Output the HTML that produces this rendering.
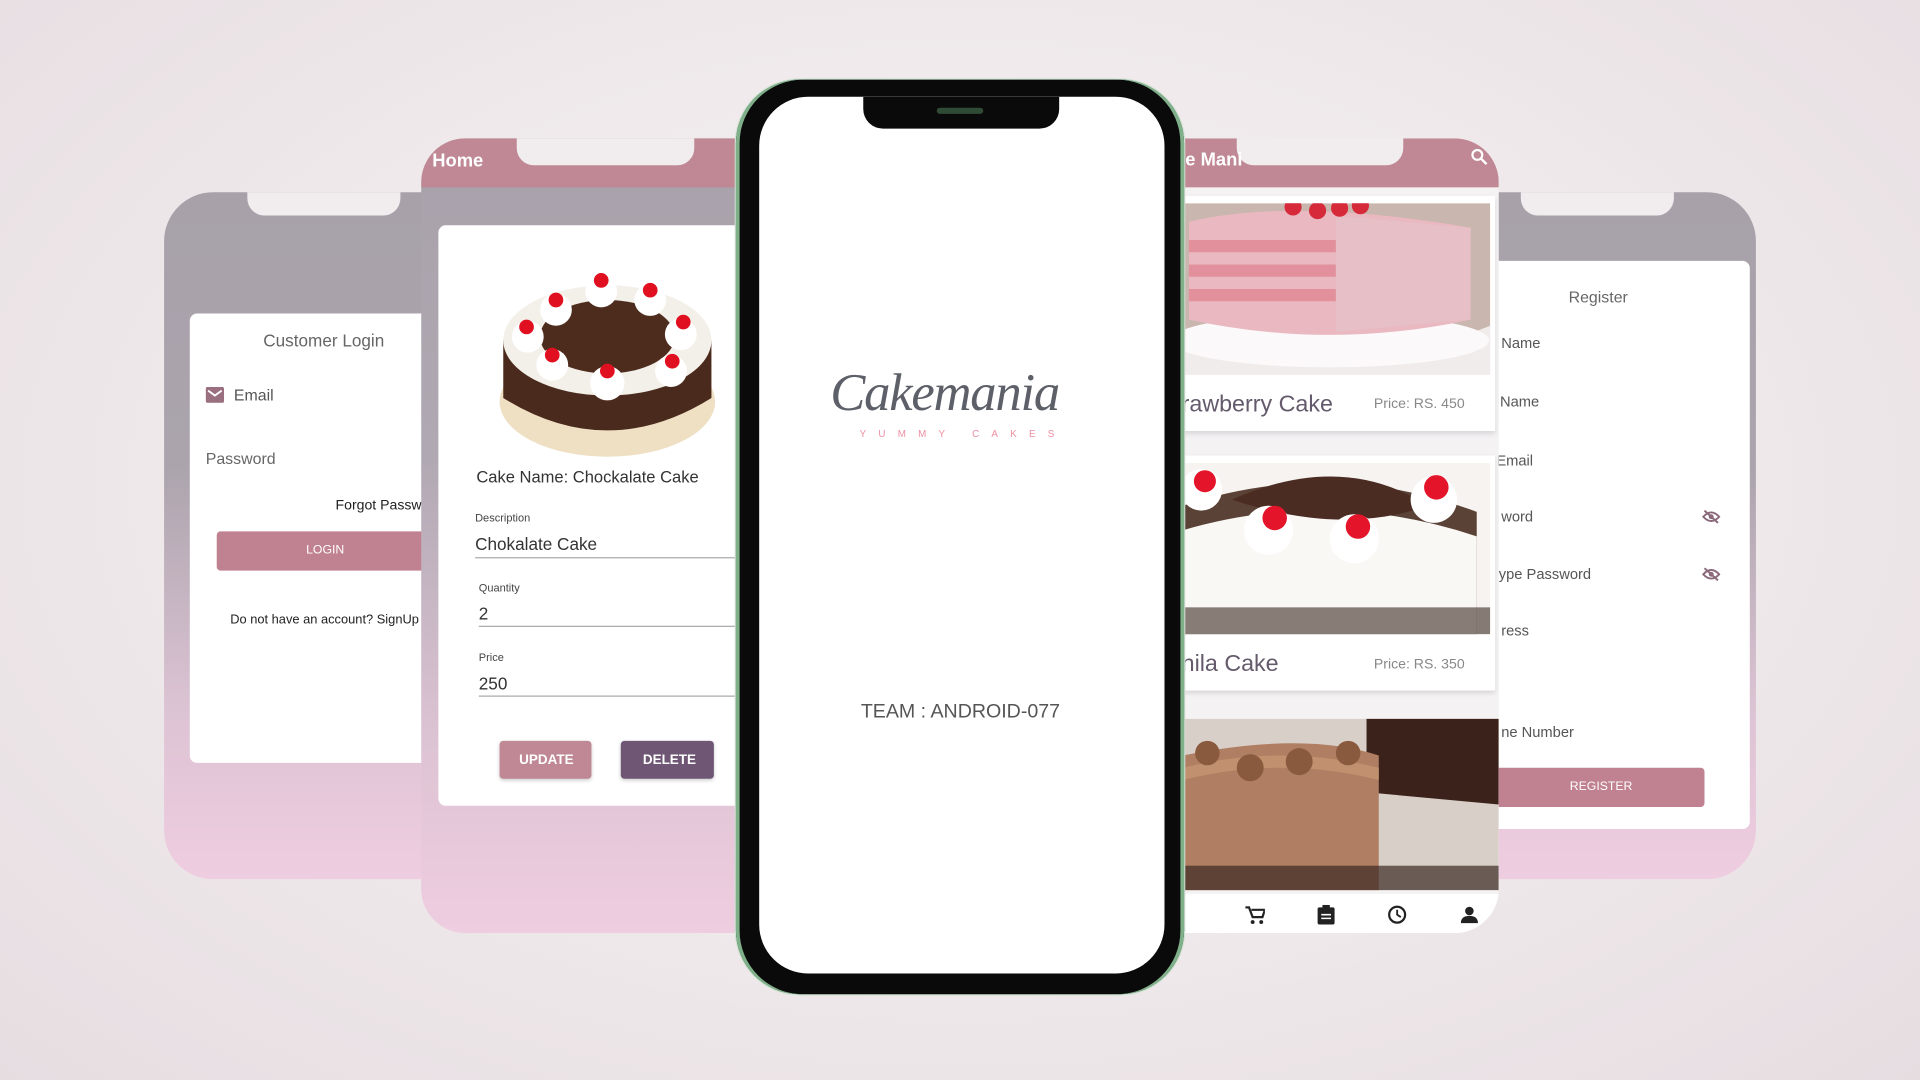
<!DOCTYPE html>
<html><head><meta charset="utf-8"><style>
*{margin:0;padding:0;box-sizing:border-box}
html,body{width:1920px;height:1080px;overflow:hidden;background:#eee8ea}
#w{position:absolute;left:0;top:0;width:1568px;height:882px;transform:scale(1.22449);transform-origin:0 0;
background:radial-gradient(ellipse at 50% 45%,#f7f4f5 0%,#efe9eb 55%,#e6dde1 100%);font-family:"Liberation Sans",sans-serif;overflow:hidden}
.abs{position:absolute}
.ph{position:absolute;overflow:hidden}
.t{position:absolute;white-space:nowrap}
</style></head><body><div id="w">

<!-- left login phone -->
<div class="ph" style="left:134px;top:157px;width:230px;height:561px;border-radius:40px 0 0 40px;background:linear-gradient(#a8a1aa 0%,#aba4ad 40%,#dcc3d3 75%,#efcde0 100%)">
  <div class="abs" style="left:68px;top:-2px;width:125px;height:21px;background:#f1edef;border-radius:0 0 14px 14px"></div>
  <div class="abs" style="left:21px;top:99px;width:210px;height:367px;background:#fff;border-radius:6px"></div>
  <div class="t" style="left:81px;top:113px;font-size:14px;color:#666">Customer Login</div>
  <svg class="abs" style="left:34px;top:159px" width="15" height="13"><rect width="15" height="13" rx="1.5" fill="#9a6f7f"/><path d="M2 3l5.5 4 5.5-4" stroke="#fff" stroke-width="1.6" fill="none"/></svg>
  <div class="t" style="left:57px;top:158px;font-size:13px;color:#555">Email</div>
  <div class="t" style="left:34px;top:210px;font-size:13px;color:#666">Password</div>
  <div class="t" style="left:140px;top:250px;font-size:11.5px;color:#222">Forgot Password?</div>
  <div class="abs" style="left:43px;top:277px;width:180px;height:32px;background:#c08290;border-radius:3px"></div>
  <div class="t" style="left:116px;top:287px;font-size:10px;color:#fff">LOGIN</div>
  <div class="t" style="left:54px;top:343px;font-size:10.5px;color:#222">Do not have an account? SignUp</div>
</div>

<!-- far right register phone -->
<div class="ph" style="left:1200px;top:157px;width:234px;height:561px;border-radius:0 40px 40px 0;background:linear-gradient(#a8a1aa 0%,#aba4ad 40%,#dcc3d3 75%,#efcde0 100%)">
  <div class="abs" style="left:42px;top:-2px;width:125px;height:21px;background:#f1edef;border-radius:0 0 14px 14px"></div>
  <div class="abs" style="left:0;top:56px;width:229px;height:464px;background:#fff;border-radius:6px"></div>
  <div class="t" style="left:81px;top:78px;font-size:13px;color:#666">Register</div>
  <div class="t" style="left:26px;top:116px;font-size:12px;color:#555">Name</div>
  <div class="t" style="left:25px;top:164px;font-size:12px;color:#555">Name</div>
  <div class="t" style="left:22px;top:212px;font-size:12px;color:#555">Email</div>
  <div class="t" style="left:26px;top:258px;font-size:12px;color:#555">word</div>
  <div class="t" style="left:24px;top:305px;font-size:12px;color:#555">ype Password</div>
  <div class="t" style="left:26px;top:351px;font-size:12px;color:#555">ress</div>
  <div class="t" style="left:26px;top:434px;font-size:12px;color:#555">ne Number</div>
  <svg class="abs" style="left:190px;top:259px" width="15" height="12"><path d="M1 6q6.5-7 13 0q-6.5 7-13 0z" fill="none" stroke="#8a6a7a" stroke-width="1.6"/><circle cx="7.5" cy="6" r="2" fill="#8a6a7a"/><path d="M2 1l11 10" stroke="#8a6a7a" stroke-width="1.6"/></svg>
  <svg class="abs" style="left:190px;top:306px" width="15" height="12"><path d="M1 6q6.5-7 13 0q-6.5 7-13 0z" fill="none" stroke="#8a6a7a" stroke-width="1.6"/><circle cx="7.5" cy="6" r="2" fill="#8a6a7a"/><path d="M2 1l11 10" stroke="#8a6a7a" stroke-width="1.6"/></svg>
  <div class="abs" style="left:0;top:470px;width:192px;height:32px;background:#c08290;border-radius:3px"></div>
  <div class="t" style="left:82px;top:480px;font-size:10px;color:#fff">REGISTER</div>
</div>

<!-- home phone -->
<div class="ph" style="left:344px;top:113px;width:270px;height:649px;border-radius:36px 0 0 36px;background:linear-gradient(#a8a1aa 0%,#b0a8b2 40%,#dcc3d3 75%,#efcde0 100%)">
  <div class="abs" style="left:0;top:0;width:270px;height:40px;background:#bf8894"></div>
  <div class="abs" style="left:78px;top:-2px;width:145px;height:24px;background:#f1edef;border-radius:0 0 14px 14px"></div>
  <div class="t" style="left:9px;top:10px;font-size:15px;font-weight:bold;color:#fff">Home</div>
  <div class="abs" style="left:14px;top:71px;width:256px;height:474px;background:#fff;border-radius:6px"></div>
  <svg class="abs" style="left:62px;top:100px" width="180" height="165">
    <ellipse cx="90" cy="115" rx="88" ry="45" fill="#efe0c4"/>
    <path d="M5 65 L5 112 Q90 165 175 112 L175 65z" fill="#4a2a1c"/>
    <ellipse cx="90" cy="65" rx="85" ry="45" fill="#f3efe9"/>
    <ellipse cx="90" cy="62" rx="55" ry="30" fill="#4d2c1d"/>
    <g fill="#fff"><circle cx="48" cy="40" r="13"/><circle cx="85" cy="25" r="13"/><circle cx="125" cy="32" r="13"/><circle cx="150" cy="60" r="13"/><circle cx="142" cy="90" r="13"/><circle cx="90" cy="100" r="14"/><circle cx="45" cy="85" r="13"/><circle cx="25" cy="62" r="13"/></g>
    <g fill="#e01020"><circle cx="48" cy="32" r="6"/><circle cx="85" cy="16" r="6"/><circle cx="125" cy="24" r="6"/><circle cx="152" cy="50" r="6"/><circle cx="143" cy="82" r="6"/><circle cx="90" cy="90" r="6"/><circle cx="45" cy="77" r="6"/><circle cx="24" cy="54" r="6"/></g>
  </svg>
  <div class="t" style="left:45px;top:269px;font-size:13.5px;color:#333">Cake Name: Chockalate Cake</div>
  <div class="t" style="left:44px;top:305px;font-size:9px;color:#444">Description</div>
  <div class="t" style="left:44px;top:323px;font-size:14px;color:#333">Chokalate Cake</div>
  <div class="abs" style="left:44px;top:342px;width:226px;height:1px;background:#aaa"></div>
  <div class="t" style="left:47px;top:362px;font-size:9px;color:#444">Quantity</div>
  <div class="t" style="left:47px;top:380px;font-size:14px;color:#333">2</div>
  <div class="abs" style="left:47px;top:398px;width:223px;height:1px;background:#aaa"></div>
  <div class="t" style="left:47px;top:419px;font-size:9px;color:#444">Price</div>
  <div class="t" style="left:47px;top:437px;font-size:14px;color:#333">250</div>
  <div class="abs" style="left:47px;top:455px;width:223px;height:1px;background:#aaa"></div>
  <div class="abs" style="left:64px;top:492px;width:75px;height:31px;background:#bf8894;border-radius:3px;box-shadow:0 1px 3px #0003"></div>
  <div class="t" style="left:80px;top:502px;font-size:11px;font-weight:bold;color:#fff">UPDATE</div>
  <div class="abs" style="left:163px;top:492px;width:76px;height:31px;background:#6f5674;border-radius:3px;box-shadow:0 1px 3px #0003"></div>
  <div class="t" style="left:181px;top:502px;font-size:11px;font-weight:bold;color:#fff">DELETE</div>
</div>

<!-- menu phone -->
<div class="ph" style="left:955px;top:113px;width:269px;height:649px;border-radius:0 36px 36px 0;background:#f4f2f3">
  <div class="abs" style="left:0;top:0;width:269px;height:40px;background:#bf8894"></div>
  <div class="abs" style="left:55px;top:-2px;width:136px;height:24px;background:#f1edef;border-radius:0 0 14px 14px"></div>
  <div class="t" style="left:13px;top:9px;font-size:15px;font-weight:bold;color:#fff">e Mani</div>
  <svg class="abs" style="left:246px;top:8px" width="14" height="14"><circle cx="5.5" cy="5.5" r="4" fill="none" stroke="#fff" stroke-width="1.8"/><path d="M8.5 8.5l4.5 4.5" stroke="#fff" stroke-width="2"/></svg>
  <div class="abs" style="left:0;top:47px;width:266px;height:192px;background:#fff;box-shadow:0 2px 4px #0002"></div>
  <svg class="abs" style="left:11px;top:53px" width="251" height="140">
    <rect width="251" height="140" fill="#c9b6ae"/>
    <path d="M0 110 Q125 150 251 100 L251 140 L0 140z" fill="#efeceb"/>
    <ellipse cx="120" cy="112" rx="130" ry="22" fill="#fbf9f9"/>
    <path d="M5 15 Q90 -5 235 20 L235 95 Q120 120 5 95z" fill="#e9b8c0"/>
    <g fill="#e2919c"><rect x="5" y="30" width="120" height="10"/><rect x="5" y="50" width="120" height="10"/><rect x="5" y="70" width="120" height="10"/></g>
    <path d="M125 10 L235 20 L235 95 L125 105z" fill="#e7bfc6"/>
    <g fill="#d62a3a"><circle cx="90" cy="3" r="7"/><circle cx="110" cy="6" r="7"/><circle cx="128" cy="4" r="7"/><circle cx="145" cy="2" r="7"/></g>
  </svg>
  <div class="t" style="left:10px;top:207px;font-size:19px;color:#645a6b">rawberry Cake</div>
  <div class="t" style="left:167px;top:211px;font-size:11.5px;color:#888">Price: RS. 450</div>
  <div class="abs" style="left:0;top:259px;width:266px;height:192px;background:#fff;box-shadow:0 2px 4px #0002"></div>
  <svg class="abs" style="left:11px;top:265px" width="251" height="140">
    <rect width="251" height="140" fill="#f6f3f1"/>
    <path d="M0 35 Q120 -5 240 40 L240 140 L0 140z" fill="#5b4236"/>
    <path d="M0 55 Q120 20 240 60 L240 140 L0 140z" fill="#faf8f5"/>
    <path d="M40 30 Q130 -10 200 35 Q130 60 40 30z" fill="#4a2c22"/>
    <g fill="#fff"><circle cx="15" cy="22" r="17"/><circle cx="70" cy="55" r="20"/><circle cx="140" cy="62" r="20"/><circle cx="205" cy="30" r="19"/></g>
    <g fill="#e4142a"><circle cx="18" cy="15" r="9"/><circle cx="75" cy="45" r="10"/><circle cx="143" cy="52" r="10"/><circle cx="207" cy="20" r="10"/></g>
    <rect x="0" y="118" width="251" height="22" fill="#3a2a22" opacity=".6"/>
  </svg>
  <div class="t" style="left:10px;top:419px;font-size:19px;color:#645a6b">nila Cake</div>
  <div class="t" style="left:167px;top:424px;font-size:11.5px;color:#888">Price: RS. 350</div>
  <svg class="abs" style="left:11px;top:474px" width="258" height="140">
    <rect width="258" height="140" fill="#d9cfc9"/>
    <path d="M150 0 L258 0 L258 70 L150 60z" fill="#3b231b"/>
    <path d="M0 30 Q100 10 160 30 L160 140 L0 140z" fill="#b07e62"/>
    <path d="M0 40 Q80 20 160 40 L160 50 Q80 30 0 50z" fill="#c0906f"/>
    <g fill="#8a5a3e"><circle cx="20" cy="28" r="10"/><circle cx="55" cy="40" r="11"/><circle cx="95" cy="35" r="11"/><circle cx="135" cy="28" r="10"/></g>
    <rect x="0" y="120" width="258" height="20" fill="#3b2a22" opacity=".7"/>
  </svg>
  <div class="abs" style="left:0;top:617px;width:269px;height:32px;background:#fff"></div>
  <svg class="abs" style="left:62px;top:627px" width="16" height="15"><path d="M0 1h3l3 8h8l2-6H5" fill="none" stroke="#222" stroke-width="1.8"/><circle cx="6" cy="13" r="1.6" fill="#222"/><circle cx="13" cy="13" r="1.6" fill="#222"/></svg>
  <svg class="abs" style="left:121px;top:626px" width="14" height="16"><rect x="0" y="2" width="14" height="14" rx="1.5" fill="#222"/><rect x="4" y="0" width="6" height="4" fill="#222"/><path d="M3 8h8M3 11h8" stroke="#fff" stroke-width="1.3"/></svg>
  <svg class="abs" style="left:178px;top:626px" width="16" height="16"><circle cx="8" cy="8" r="6.5" fill="none" stroke="#222" stroke-width="1.8"/><path d="M8 4v4l3 2" fill="none" stroke="#222" stroke-width="1.5"/></svg>
  <svg class="abs" style="left:238px;top:627px" width="14" height="14"><circle cx="7" cy="4" r="3.5" fill="#222"/><path d="M0 14q0-6 7-6t7 6z" fill="#222"/></svg>
</div>

<!-- center phone -->
<div class="abs" style="left:601px;top:65px;width:366px;height:747px;border-radius:52px;background:#0a0a0a;box-shadow:-3px 0 0 #7fb08a inset, 3px 0 0 #7fb08a inset, 0 0 0 1px #cfe3d2"></div>
<div class="abs" style="left:620px;top:79px;width:331px;height:716px;border-radius:40px;background:#fff;overflow:hidden">
  <div class="abs" style="left:85px;top:0;width:160px;height:26px;background:#0a0a0a;border-radius:0 0 16px 16px"></div>
  <div class="abs" style="left:145px;top:9px;width:38px;height:5px;background:#2f4a35;border-radius:3px"></div>
  <div class="t" style="left:58px;top:218px;font-family:'Liberation Serif',serif;font-style:italic;font-size:43px;color:#5d6069;letter-spacing:-1px">Cakemania</div>
  <div class="t" style="left:82px;top:271px;font-size:8px;letter-spacing:10px;color:#ef8ea0">YUMMY CAKES</div>
  <div class="t" style="left:83px;top:494px;font-size:16px;color:#555">TEAM : ANDROID-077</div>
</div>

</div></body></html>
